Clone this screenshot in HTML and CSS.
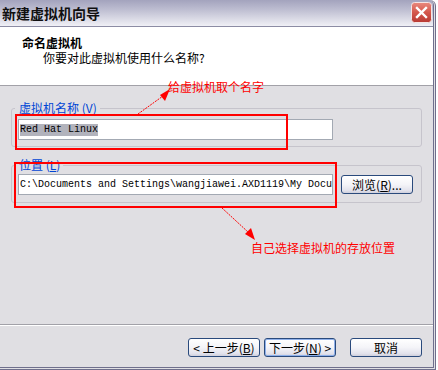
FILE: index.html
```html
<!DOCTYPE html>
<html lang="zh-CN">
<head>
<meta charset="utf-8">
<title>新建虚拟机向导</title>
<link rel="stylesheet" href="styles.css">
</head>
<body>
<div class="window">
  <div class="titlebar">
    <span class="title">新建虚拟机向导</span>
    <span class="close">
      <svg width="21" height="21" viewBox="0 0 21 21">
        <defs>
          <linearGradient id="cg" x1="0" y1="0" x2="0" y2="1">
            <stop offset="0" stop-color="#e98a7e"/>
            <stop offset="0.5" stop-color="#d4574c"/>
            <stop offset="1" stop-color="#b83a34"/>
          </linearGradient>
        </defs>
        <rect x="0.5" y="0.5" width="20" height="20" rx="3" fill="url(#cg)" stroke="#f4e4e4"/>
        <path d="M6 6 L15 15 M15 6 L6 15" stroke="#fff" stroke-width="2.4" stroke-linecap="square"/>
      </svg>
    </span>
  </div>
  <div class="header">
    <div class="h-title">命名虚拟机</div>
    <div class="h-sub">你要对此虚拟机使用什么名称?</div>
  </div>
  <div class="content">
    <fieldset class="group group-name">
      <legend class="group-label">虚拟机名称 (<u>V</u>)</legend>
      <div class="textbox"><span class="sel">Red Hat Linux</span></div>
    </fieldset>
    <fieldset class="group group-loc">
      <legend class="group-label">位置 (<u>L</u>)</legend>
      <div class="row">
        <div class="textbox">C:\Documents and Settings\wangjiawei.AXD1119\My Docu</div>
        <button class="btn">浏览(<u>R</u>)...</button>
      </div>
    </fieldset>
  </div>
  <div class="footer">
    <button class="btn">&lt; 上一步(<u>B</u>)</button>
    <button class="btn default">下一步(<u>N</u>) &gt;</button>
    <button class="btn cancel">取消</button>
  </div>

  <svg class="marks" width="436" height="370" viewBox="0 0 436 370">
    <rect x="16" y="115" width="271" height="34" fill="none" stroke="#ff0000" stroke-width="2"/>
    <rect x="15" y="163" width="321" height="44" fill="none" stroke="#ff0000" stroke-width="2"/>
    <line x1="138" y1="114" x2="163" y2="96" stroke="#ff0000" stroke-width="1" stroke-dasharray="2 1"/>
    <polygon points="170,89 160,95 165,101" fill="#ff0000"/>
    <line x1="222" y1="208" x2="248" y2="232" stroke="#ff0000" stroke-width="1" stroke-dasharray="2 1"/>
    <polygon points="255,240 245,234 251,228" fill="#ff0000"/>
  </svg>
  <span class="note note-name">给虚拟机取个名字</span>
  <span class="note note-loc">自己选择虚拟机的存放位置</span>
</div>
</body>
</html>
```
FILE: styles.css
```css
* { box-sizing: border-box; }

body {
  margin: 0;
  background: #ffffff;
  font-family: "Noto Sans CJK SC", "Noto Sans", sans-serif;
  font-size: 12px;
  color: #000;
}

.window {
  position: relative;
  width: 436px;
  height: 370px;
  display: flex;
  flex-direction: column;
  background: #e0dfe3;
  border-right: 3px double #6f6f8c;
  border-bottom: 3px double #6f6f8c;
  border-top-right-radius: 6px;
  overflow: hidden;
}

.titlebar {
  height: 27px;
  flex: none;
  display: flex;
  align-items: center;
  justify-content: space-between;
  padding: 0 1px 1px 2px;
  background: linear-gradient(#a3a3bd 0%, #bcbcd0 35%, #d8d8e4 70%, #f0f0f6 100%);
  border-bottom: 1px solid #8c8ca4;
}

.title {
  font-size: 14px;
  font-weight: bold;
  line-height: 16px;
  color: #101010;
}

.close {
  display: flex;
  width: 21px;
  height: 21px;
}

.header {
  height: 59px;
  flex: none;
  background: #ffffff;
  border-bottom: 1px solid #a2a1a8;
  padding: 8px 0 0 22px;
}

.h-title {
  font-weight: bold;
  line-height: 15px;
}

.h-sub {
  line-height: 15px;
  padding-left: 21px;
}

.content {
  flex: 1;
  display: flex;
  flex-direction: column;
  padding: 15px 11px 0 11px;
}

.group {
  margin: 0;
  border: 1px solid #c6c4cc;
  border-radius: 3px;
  padding: 4px 8px 6px 6px;
  min-width: 0;
}

.group-loc {
  margin-top: 11px;
  padding: 2px 8px 7px 6px;
}

.group-label {
  margin-left: -3px;
  padding: 0 3px 0 4px;
  color: #0046d5;
  line-height: 14px;
}

.row {
  display: flex;
  align-items: center;
  gap: 8px;
}

.textbox {
  width: 315px;
  height: 21px;
  flex: none;
  background: #ffffff;
  border: 1px solid #a3a9b3;
  padding: 0 1px;
  font-family: "Liberation Mono", monospace;
  font-size: 10px;
  line-height: 19px;
  white-space: nowrap;
  overflow: hidden;
}

.sel {
  background: #b2b3bc;
  display: inline-block;
  line-height: 12px;
}

.btn {
  width: 72px;
  height: 19px;
  padding: 0;
  font-family: "Noto Sans CJK SC", "Noto Sans", sans-serif;
  font-size: 12px;
  line-height: 15px;
  color: #000;
  border: 1px solid #2a4a7c;
  border-radius: 3px;
  background: linear-gradient(#ffffff 0%, #f4f4f8 50%, #e2e2ec 85%, #cfcfdc 100%);
}

.btn.default {
  box-shadow: inset 0 0 0 1px #8eb0ea;
}

.footer {
  height: 43px;
  flex: none;
  display: flex;
  justify-content: flex-end;
  align-items: flex-start;
  gap: 4px;
  padding: 13px 11px 0 0;
  border-top: 1px solid #a2a1a8;
  box-shadow: inset 0 1px 0 #ffffff;
}

.btn.cancel {
  margin-left: 10px;
}

.marks {
  position: absolute;
  left: 0;
  top: 0;
  pointer-events: none;
}

.note {
  position: absolute;
  color: #ff0000;
  font-size: 12px;
  line-height: 14px;
  white-space: nowrap;
}

.note-name {
  left: 168px;
  top: 80px;
}

.note-loc {
  left: 251px;
  top: 241px;
}
```
